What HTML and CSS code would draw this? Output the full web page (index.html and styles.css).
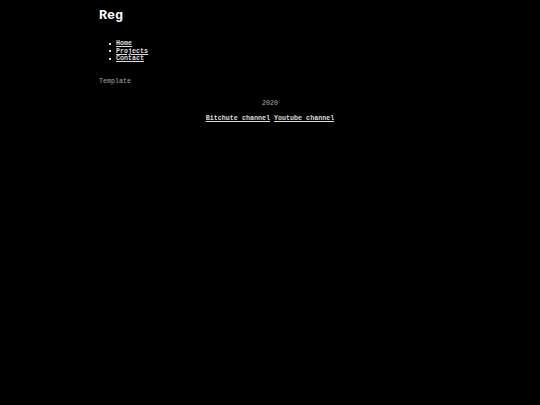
FILE: index.html
```html
<!DOCTYPE html>
<html>
<head>
<meta charset="utf-8">
<link rel="stylesheet" href="styles.css">
</head>
<body>
<div class="page">
  <h1 class="title">Reg</h1>
  <ul class="nav">
    <li><a href="#">Home</a></li>
    <li><a href="#">Projects</a></li>
    <li><a href="#">Contact</a></li>
  </ul>
  <p class="content">Template</p>
</div>
<footer class="footer">
  <p class="year">2020</p>
  <p class="links"><a href="#">Bitchute channel</a> <a href="#">Youtube channel</a></p>
</footer>
</body>
</html>
```
FILE: styles.css
```css
html, body {
  margin: 0;
  padding: 0;
  background: #000;
  color: #fff;
  font-family: "Liberation Mono", "Courier New", monospace;
}
.page {
  width: 342px;
  margin: 0 auto;
  padding-top: 8px;
}
.title {
  font-size: 13.3px;
  font-weight: bold;
  margin: 0;
  line-height: 16px;
}
.nav {
  list-style: none;
  margin: 16px 0 0 0;
  padding-left: 10px;
  font-size: 6.7px;
  line-height: 7.5px;
  font-weight: bold;
}
.nav li {
  display: flex;
  align-items: center;
}
.nav li::before {
  content: "";
  width: 2px;
  height: 2px;
  background: #ddd;
  margin-right: 5px;
}
.nav a {
  color: #ddd;
}
.content {
  margin: 14px 0 0 0;
  font-size: 6.7px;
  line-height: 8px;
  color: #aaa;
}
.footer {
  text-align: center;
  font-size: 6.7px;
  line-height: 8px;
}
.year {
  margin: 14px 0 0 0;
  color: #aaa;
}
.links {
  margin: 7px 0 0 0;
  font-weight: bold;
}
.links a {
  color: #ddd;
}
```
